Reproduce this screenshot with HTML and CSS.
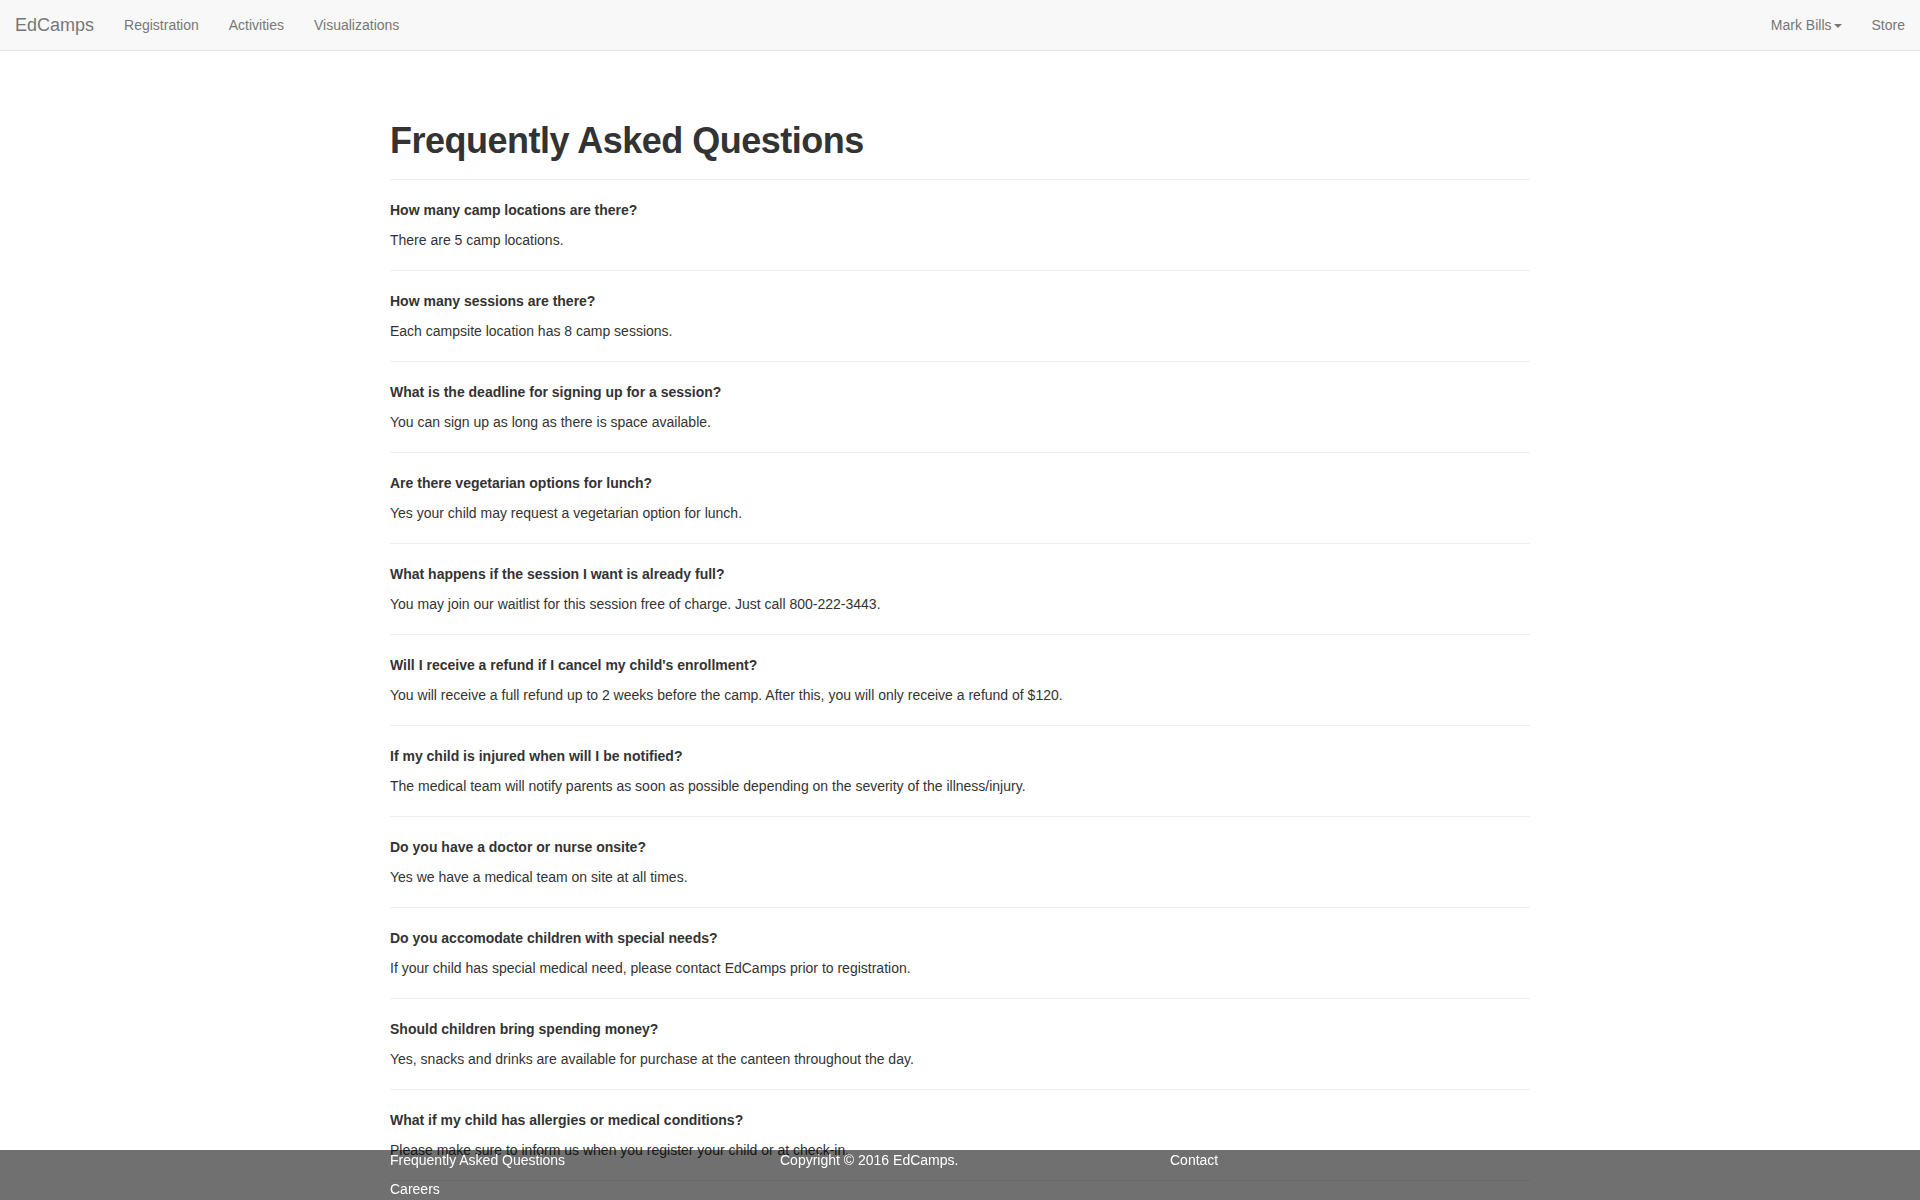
FILE: index.html
```html
<!DOCTYPE html>
<html lang="en">
<head>
<meta charset="utf-8">
<title>EdCamps - Frequently Asked Questions</title>
<link rel="stylesheet" href="styles.css">
</head>
<body>
<nav class="navbar">
  <div class="nav-left">
    <a class="brand" href="#">EdCamps</a>
    <ul class="nav">
      <li><a href="#">Registration</a></li>
      <li><a href="#">Activities</a></li>
      <li><a href="#">Visualizations</a></li>
    </ul>
  </div>
  <ul class="nav nav-right">
    <li><a href="#">Mark Bills<span class="caret"></span></a></li>
    <li><a href="#">Store</a></li>
  </ul>
</nav>

<main class="container">
  <div class="page-header">
    <h1>Frequently Asked Questions</h1>
  </div>
  <div class="faq">
    <p class="q">How many camp locations are there?</p>
    <p class="a">There are 5 camp locations.</p>
  </div>
  <div class="faq">
    <p class="q">How many sessions are there?</p>
    <p class="a">Each campsite location has 8 camp sessions.</p>
  </div>
  <div class="faq">
    <p class="q">What is the deadline for signing up for a session?</p>
    <p class="a">You can sign up as long as there is space available.</p>
  </div>
  <div class="faq">
    <p class="q">Are there vegetarian options for lunch?</p>
    <p class="a">Yes your child may request a vegetarian option for lunch.</p>
  </div>
  <div class="faq">
    <p class="q">What happens if the session I want is already full?</p>
    <p class="a">You may join our waitlist for this session free of charge. Just call 800-222-3443.</p>
  </div>
  <div class="faq">
    <p class="q">Will I receive a refund if I cancel my child's enrollment?</p>
    <p class="a">You will receive a full refund up to 2 weeks before the camp. After this, you will only receive a refund of $120.</p>
  </div>
  <div class="faq">
    <p class="q">If my child is injured when will I be notified?</p>
    <p class="a">The medical team will notify parents as soon as possible depending on the severity of the illness/injury.</p>
  </div>
  <div class="faq">
    <p class="q">Do you have a doctor or nurse onsite?</p>
    <p class="a">Yes we have a medical team on site at all times.</p>
  </div>
  <div class="faq">
    <p class="q">Do you accomodate children with special needs?</p>
    <p class="a">If your child has special medical need, please contact EdCamps prior to registration.</p>
  </div>
  <div class="faq">
    <p class="q">Should children bring spending money?</p>
    <p class="a">Yes, snacks and drinks are available for purchase at the canteen throughout the day.</p>
  </div>
  <div class="faq">
    <p class="q">What if my child has allergies or medical conditions?</p>
    <p class="a">Please make sure to inform us when you register your child or at check-in.</p>
  </div>
</main>

<footer class="footer">
  <div class="footer-inner">
    <div class="col">
      <a href="#">Frequently Asked Questions</a>
      <a href="#">Careers</a>
    </div>
    <div class="col">
      <span>Copyright &copy; 2016 EdCamps.</span>
    </div>
    <div class="col">
      <a href="#">Contact</a>
    </div>
  </div>
</footer>
</body>
</html>
```

FILE: styles.css
```css
* { box-sizing: border-box; }

html, body {
  margin: 0;
  padding: 0;
}

body {
  font-family: "Liberation Sans", Arial, Helvetica, sans-serif;
  font-size: 14px;
  line-height: 20px;
  color: #333;
  background: #fff;
}

a { text-decoration: none; }

.navbar {
  display: flex;
  justify-content: space-between;
  height: 51px;
  background: #f8f8f8;
  border-bottom: 1px solid #e7e7e7;
}

.nav-left {
  display: flex;
}

.brand {
  display: block;
  padding: 15px;
  font-size: 18px;
  line-height: 20px;
  color: #777;
}

.nav {
  display: flex;
  list-style: none;
  margin: 0;
  padding: 0;
}

.nav a {
  display: block;
  padding: 15px;
  line-height: 20px;
  color: #777;
}

.caret {
  display: inline-block;
  width: 0;
  height: 0;
  margin-left: 2px;
  vertical-align: middle;
  border-top: 4px solid #777;
  border-left: 4px solid transparent;
  border-right: 4px solid transparent;
}

.container {
  width: 1170px;
  margin: 0 auto;
  padding: 0 15px;
}

.page-header {
  margin-top: 70px;
  padding-bottom: 18px;
  border-bottom: 1px solid #eee;
}

.page-header h1 {
  margin: 0;
  font-size: 36px;
  line-height: 40px;
  font-weight: 700;
  letter-spacing: -0.5px;
  color: #333;
}

.faq {
  padding: 20px 0;
  border-bottom: 1px solid #eee;
}

.faq p {
  margin: 0;
}

.faq .q {
  font-weight: bold;
  margin-bottom: 10px;
}

.footer {
  position: fixed;
  left: 0;
  right: 0;
  bottom: 0;
  height: 50px;
  background: rgba(0, 0, 0, 0.56);
  color: #fff;
}

.footer-inner {
  width: 1170px;
  margin: 0 auto;
  padding: 0 15px;
  display: grid;
  grid-template-columns: repeat(3, 1fr);
  column-gap: 30px;
}

.footer .col {
  display: flex;
  flex-direction: column;
  gap: 9px;
}

.footer a,
.footer span {
  color: #fff;
  line-height: 20px;
}
```
